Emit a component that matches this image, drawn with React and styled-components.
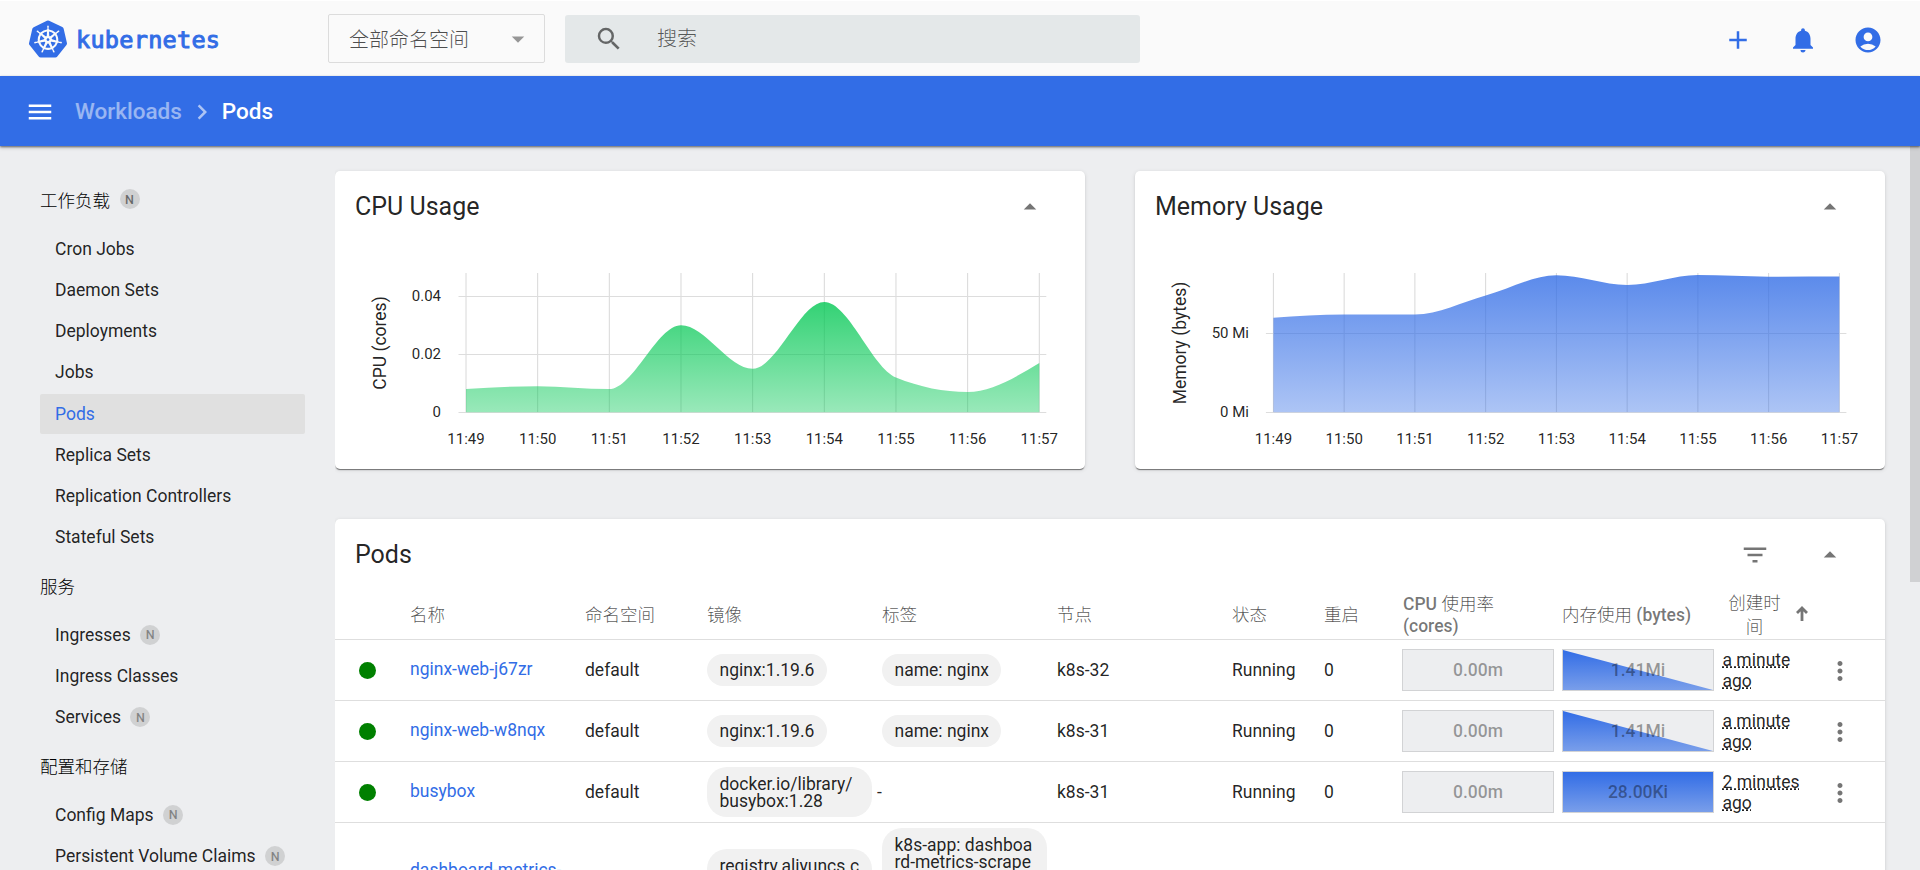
import React from 'react';
import styled, { createGlobalStyle } from 'styled-components';
import {
  MdAccountCircle,
  MdAdd,
  MdArrowDropDown,
  MdArrowDropUp,
  MdChevronRight,
  MdFilterList,
  MdMenu,
  MdMoreVert,
  MdNotifications,
  MdSearch,
} from 'react-icons/md';
import { SiKubernetes } from 'react-icons/si';

const GlobalStyle = createGlobalStyle`
  * {
    box-sizing: border-box;
  }

  body {
    margin: 0;
    overflow: hidden;
    font-family: Roboto, 'Noto Sans CJK SC', sans-serif;
    font-size: 17.5px;
    color: rgba(0, 0, 0, 0.87);
    background-color: #edeef0;
  }

  svg {
    display: block;
    flex-shrink: 0;
  }
`;

const Page = styled.div`
  display: flex;
  flex-direction: column;
  height: 870px;
  overflow: hidden;
`;

const Header = styled.header`
  display: flex;
  align-items: center;
  flex-shrink: 0;
  height: 76px;
  padding: 0 37px 0 29px;
  background-color: #fafafa;
  border-top: 1px solid #fff;
`;

const Logo = styled.div`
  display: flex;
  align-items: center;
  width: 299px;
  padding-top: 1px;
  color: #326de6;
`;

const NamespaceSelect = styled.div`
  display: flex;
  align-items: center;
  justify-content: space-between;
  width: 217px;
  height: 49px;
  margin-right: 20px;
  padding: 0 11px 0 20px;
  border: 1px solid #dcdcdc;
  border-radius: 2px;
  font-size: 20px;
  font-weight: 300;
  color: rgba(0, 0, 0, 0.7);

  svg {
    color: rgba(0, 0, 0, 0.4);
  }
`;

const SearchBox = styled.div`
  display: flex;
  align-items: center;
  width: 575px;
  height: 48px;
  padding: 0 29px;
  gap: 33px;
  border-radius: 3px;
  background-color: #e4e8e9;
  font-size: 20px;
  font-weight: 300;
  color: rgba(0, 0, 0, 0.65);

  svg {
    color: rgba(0, 0, 0, 0.56);
  }
`;

const SearchHint = styled.span`
  padding-bottom: 2px;
`;

const HeaderActions = styled.div`
  display: flex;
  gap: 35px;
  margin-left: auto;
  padding-top: 3px;
  color: #326de6;
`;

const ActionBar = styled.div`
  display: flex;
  align-items: center;
  flex-shrink: 0;
  height: 70px;
  padding-left: 25px;
  background-color: #326de6;
  color: #fff;
  font-size: 22.5px;
  font-weight: 500;
  box-shadow: 0 1px 2px rgba(0, 0, 0, 0.5), 0 2px 4px rgba(0, 0, 0, 0.16);
  z-index: 1;
`;

const MenuIcon = styled(MdMenu)`
  margin-top: 2px;
`;

const Crumb = styled.span`
  margin-left: ${({ $first }) => ($first ? '20px' : '5px')};
  margin-right: 5px;
  opacity: ${({ $first }) => ($first ? 0.5 : 1)};
`;

const CrumbArrow = styled(MdChevronRight)`
  margin-top: 1px;
  opacity: 0.6;
`;

const Body = styled.div`
  display: flex;
  flex: 1;
  min-height: 0;
`;

const Sidebar = styled.nav`
  flex-shrink: 0;
  width: 335px;
  padding: 26.4px 30px 0 40px;
  overflow: hidden;
`;

const NavHeading = styled.div`
  display: flex;
  align-items: center;
  height: 56.25px;
  padding-bottom: 3px;
  font-weight: 300;
  color: #000;
`;

const NavItem = styled.div`
  display: flex;
  align-items: center;
  height: 40px;
  margin-bottom: 1.25px;
  padding-left: 15px;
  border-radius: 2px;
  white-space: nowrap;
  color: ${({ $active }) => ($active ? '#326de6' : 'inherit')};
  background-color: ${({ $active }) => ($active ? '#e0e0e0' : 'transparent')};
`;

const Badge = styled.span`
  display: flex;
  align-items: center;
  justify-content: center;
  width: 20px;
  height: 20px;
  margin-left: 9.5px;
  border-radius: 50%;
  background-color: rgba(0, 0, 0, 0.12);
  color: ${({ $dark }) => ($dark ? 'rgba(0, 0, 0, 0.5)' : 'rgba(0, 0, 0, 0.38)')};
  font-size: 12.5px;
  font-weight: 500;
`;

const Content = styled.main`
  flex: 1;
  min-width: 0;
  padding: 25px 25px 0 0;
  overflow: hidden;
`;

const ChartsRow = styled.div`
  display: flex;
  gap: 50px;
  margin-bottom: 50px;
`;

const Card = styled.section`
  width: ${({ $width }) => $width};
  border-radius: 5px;
  background-color: #fff;
  box-shadow: 0 2px 1px -1px rgba(0, 0, 0, 0.4), 0 1px 1px rgba(0, 0, 0, 0.14),
    0 1px 4px rgba(0, 0, 0, 0.12);
`;

const CardHeader = styled.div`
  display: flex;
  align-items: center;
  height: 70px;
  padding: 0 40px 0 20px;
`;

const CardTitle = styled.h2`
  flex: 1;
  margin: 0;
  font-size: 25px;
  font-weight: 400;
`;

const CardActions = styled.div`
  display: flex;
  gap: 45px;
  padding-top: 1px;
  color: rgba(0, 0, 0, 0.54);
`;

const ChartSvg = styled.svg`
  width: 750px;
  height: 228px;

  text {
    font-size: 15px;
    fill: rgba(0, 0, 0, 0.87);
  }

  .axis-title {
    font-size: 17.5px;
  }
`;

const columns = '75px 175px 122px 175px 175px 175px 92px 78px 160px 160px 96px 67px';

const HeadRow = styled.div`
  display: grid;
  grid-template-columns: ${columns};
  align-items: center;
  height: 51px;
  padding-top: 2px;
  border-bottom: 1px solid #dedede;
  font-weight: 500;
  line-height: 22.5px;
  color: rgba(0, 0, 0, 0.54);
`;

const Row = styled.div`
  display: grid;
  grid-template-columns: ${columns};
  align-items: center;
  min-height: 61px;
  padding: 5px 0;
  border-bottom: 1px solid #dedede;
  line-height: 22.5px;
`;

const HeadCjk = styled.span`
  font-weight: 300;
  color: rgba(0, 0, 0, 0.68);
`;

const HeadText = styled.div`
  padding-left: ${({ $indent }) => ($indent ? '1px' : 0)};
`;

const SortCell = styled.div`
  display: flex;
  align-items: center;
  gap: 9px;
  line-height: 24px;

  svg {
    margin-bottom: 4px;
  }
`;

const SortLabel = styled.span`
  width: 65px;
  padding: 0 5px;
  text-align: center;
  font-weight: 300;
  color: rgba(0, 0, 0, 0.68);
`;

const StatusDot = styled.div`
  width: 17px;
  height: 17px;
  margin-left: 24px;
  border-radius: 50%;
  background-color: #008000;
`;

const PodLink = styled.a`
  width: 165px;
  line-height: 21.5px;
  color: #326de6;
`;

const Chips = styled.div`
  display: flex;
  flex-direction: column;
  align-items: flex-start;
  gap: 10px;
  width: 165px;
`;

const Chip = styled.div`
  padding: 8.5px 12.5px 6.5px;
  border-radius: 20px;
  background-color: #f1f1f1;
  line-height: 17.5px;
  word-break: break-all;
`;

const NoLabels = styled.div`
  margin-left: -5px;
`;

const UsageBox = styled.div`
  display: grid;
  place-items: center;
  width: 152px;
  height: 42px;
  border: 1px solid #d2d3d5;
  background-color: #edeef0;
  font-weight: 500;
  color: rgba(0, 0, 0, 0.38);

  & > * {
    grid-area: 1 / 1;
  }
`;

const Age = styled.div`
  width: 84px;
  padding: 1px 0 0 0.5px;
  line-height: 21px;
  text-decoration: underline dotted;

  span {
    display: block;
  }
`;

const RowMenu = styled.div`
  display: flex;
  padding: 1px 0 0 7px;
  color: rgba(0, 0, 0, 0.54);
`;

const ScrollTrack = styled.div`
  flex-shrink: 0;
  width: 10px;
`;

const ScrollThumb = styled.div`
  height: 436px;
  background-color: #d0d1d3;
`;

const navGroups = [
  {
    title: '工作负载',
    namespaced: true,
    items: [
      { label: 'Cron Jobs' },
      { label: 'Daemon Sets' },
      { label: 'Deployments' },
      { label: 'Jobs' },
      { label: 'Pods', active: true },
      { label: 'Replica Sets' },
      { label: 'Replication Controllers' },
      { label: 'Stateful Sets' },
    ],
  },
  {
    title: '服务',
    items: [
      { label: 'Ingresses', namespaced: true },
      { label: 'Ingress Classes' },
      { label: 'Services', namespaced: true },
    ],
  },
  {
    title: '配置和存储',
    items: [
      { label: 'Config Maps', namespaced: true },
      { label: 'Persistent Volume Claims', namespaced: true },
    ],
  },
];

const times = ['11:49', '11:50', '11:51', '11:52', '11:53', '11:54', '11:55', '11:56', '11:57'];

const cpuChart = {
  id: 'cpu',
  title: 'CPU (cores)',
  color: '#00c752',
  values: [0.008, 0.009, 0.008, 0.03, 0.015, 0.038, 0.012, 0.007, 0.017],
  max: 0.048,
  ticks: [
    { value: 0, label: '0' },
    { value: 0.02, label: '0.02' },
    { value: 0.04, label: '0.04' },
  ],
  left: 131,
  right: 704.3,
  labelEnd: 106,
  titleX: 51,
};

const memoryChart = {
  id: 'memory',
  title: 'Memory (bytes)',
  color: '#326de6',
  values: [59.7, 61.8, 61.8, 73.8, 86.5, 80.4, 86.7, 85.7, 85.8],
  max: 88,
  ticks: [
    { value: 0, label: '0 Mi' },
    { value: 50, label: '50 Mi' },
  ],
  left: 138.4,
  right: 704.4,
  labelEnd: 114,
  titleX: 51,
};

const pods = [
  {
    name: 'nginx-web-j67zr',
    images: ['nginx:1.19.6'],
    labels: ['name: nginx'],
    node: 'k8s-32',
    cpu: '0.00m',
    memory: '1.41Mi',
    trend: [1, 0],
    age: ['a minute', 'ago'],
  },
  {
    name: 'nginx-web-w8nqx',
    images: ['nginx:1.19.6'],
    labels: ['name: nginx'],
    node: 'k8s-31',
    cpu: '0.00m',
    memory: '1.41Mi',
    trend: [1, 0],
    age: ['a minute', 'ago'],
  },
  {
    name: 'busybox',
    images: ['docker.io/library/busybox:1.28'],
    labels: [],
    node: 'k8s-31',
    cpu: '0.00m',
    memory: '28.00Ki',
    trend: [1, 1],
    age: ['2 minutes', 'ago'],
  },
  {
    name: 'dashboard-metrics-scraper-79c5968bdc-7xk2p',
    images: ['registry.aliyuncs.com/google_containers/metrics-scraper:v1.0.6'],
    labels: ['k8s-app: dashboard-metrics-scraper', 'pod-template-hash: 79c5968bdc'],
  },
];

// Monotone cubic interpolation, so the curve never overshoots its points
const monotonePath = (points) => {
  const n = points.length;
  const slopes = [];
  for (let i = 0; i < n - 1; i += 1) {
    slopes.push((points[i + 1][1] - points[i][1]) / (points[i + 1][0] - points[i][0]));
  }
  const tangents = points.map((_, i) => {
    if (i === 0 || i === n - 1) return null;
    const a = slopes[i - 1];
    const b = slopes[i];
    return (Math.sign(a) + Math.sign(b)) * Math.min(Math.abs(a), Math.abs(b), Math.abs(a + b) / 4) || 0;
  });
  tangents[0] = (3 * slopes[0] - tangents[1]) / 2;
  tangents[n - 1] = (3 * slopes[n - 2] - tangents[n - 2]) / 2;

  let d = `M${points[0][0]},${points[0][1]}`;
  for (let i = 0; i < n - 1; i += 1) {
    const [x0, y0] = points[i];
    const [x1, y1] = points[i + 1];
    const dx = (x1 - x0) / 3;
    d += `C${x0 + dx},${y0 + dx * tangents[i]},${x1 - dx},${y1 - dx * tangents[i + 1]},${x1},${y1}`;
  }
  return d;
};

const AreaChart = ({ chart }) => {
  const top = 32;
  const bottom = 171.3;
  const step = (chart.right - chart.left) / (times.length - 1);
  const x = (i) => chart.left + i * step;
  const y = (value) => bottom - (value / chart.max) * (bottom - top);
  const line = monotonePath(chart.values.map((value, i) => [x(i), y(value)]));

  return (
    <ChartSvg viewBox="0 0 750 228">
      <defs>
        <linearGradient id={`fill-${chart.id}`} x1="0" y1="0" x2="0" y2="1">
          <stop offset="0" stopColor={chart.color} stopOpacity="0.8" />
          <stop offset="1" stopColor={chart.color} stopOpacity="0.4" />
        </linearGradient>
      </defs>
      {times.map((time, i) => (
        <g key={time}>
          <line x1={x(i)} x2={x(i)} y1={top} y2={bottom} stroke="#d8d8d8" />
          <text x={x(i)} y="203" textAnchor="middle">{time}</text>
        </g>
      ))}
      {chart.ticks.map((tick) => (
        <g key={tick.label}>
          <line
            x1={chart.left - 7.5}
            x2={chart.right + 7}
            y1={Math.round(y(tick.value)) + 0.5}
            y2={Math.round(y(tick.value)) + 0.5}
            stroke="#ddd"
          />
          <text x={chart.labelEnd} y={y(tick.value) + 5} textAnchor="end">{tick.label}</text>
        </g>
      ))}
      <path d={`${line}L${chart.right},${bottom}L${chart.left},${bottom}Z`} fill={`url(#fill-${chart.id})`} />
      <text className="axis-title" textAnchor="middle" transform={`translate(${chart.titleX} 102) rotate(-90)`}>
        {chart.title}
      </text>
    </ChartSvg>
  );
};

const Trend = styled.svg`
  width: 150px;
  height: 40px;
`;

const UsageValue = styled.span`
  z-index: 1;
`;

const Usage = ({ value, trend }) => (
  <UsageBox>
    {trend && (
      <Trend viewBox="0 0 150 40">
        <defs>
          <linearGradient id="trend" x1="0" y1="0" x2="0" y2="1">
            <stop offset="0" stopColor="#326de6" />
            <stop offset="1" stopColor="#326de6" stopOpacity="0.62" />
          </linearGradient>
        </defs>
        <polygon
          points={`0,40 0,${40 - trend[0] * 40} 150,${40 - trend[1] * 40} 150,40`}
          fill="url(#trend)"
        />
      </Trend>
    )}
    <UsageValue>{value}</UsageValue>
  </UsageBox>
);

const PodRow = ({ pod }) => (
  <Row>
    <StatusDot />
    <PodLink>{pod.name}</PodLink>
    <div>default</div>
    <Chips>
      {pod.images.map((image) => (
        <Chip key={image}>{image}</Chip>
      ))}
    </Chips>
    {pod.labels.length > 0 ? (
      <Chips>
        {pod.labels.map((label) => (
          <Chip key={label}>{label}</Chip>
        ))}
      </Chips>
    ) : (
      <NoLabels>-</NoLabels>
    )}
    {pod.node && (
      <>
        <div>{pod.node}</div>
        <div>Running</div>
        <div>0</div>
        <Usage value={pod.cpu} />
        <Usage value={pod.memory} trend={pod.trend} />
        <Age>
          {pod.age.map((part) => (
            <span key={part}>{part}</span>
          ))}
        </Age>
        <RowMenu>
          <MdMoreVert size={30} />
        </RowMenu>
      </>
    )}
  </Row>
);

const App = () => (
  <Page>
    <GlobalStyle />
    <Header>
      <Logo>
        <SiKubernetes size={38} />
        <svg width="170" height="38" viewBox="0 0 170 38">
          <text
            x="9"
            y="28"
            textLength="144"
            fontFamily="DejaVu Sans Mono"
            fontSize="23.5"
            fill="#326de6"
            stroke="#326de6"
            strokeWidth="1"
          >
            kubernetes
          </text>
        </svg>
      </Logo>
      <NamespaceSelect>
        全部命名空间
        <MdArrowDropDown size={30} />
      </NamespaceSelect>
      <SearchBox>
        <MdSearch size={30} />
        <SearchHint>搜索</SearchHint>
      </SearchBox>
      <HeaderActions>
        <MdAdd size={30} />
        <MdNotifications size={30} />
        <MdAccountCircle size={30} />
      </HeaderActions>
    </Header>
    <ActionBar>
      <MenuIcon size={30} />
      <Crumb $first>Workloads</Crumb>
      <CrumbArrow size={30} />
      <Crumb>Pods</Crumb>
    </ActionBar>
    <Body>
      <Sidebar>
        {navGroups.map((group) => (
          <React.Fragment key={group.title}>
            <NavHeading>
              {group.title}
              {group.namespaced && <Badge $dark>N</Badge>}
            </NavHeading>
            {group.items.map((item) => (
              <NavItem key={item.label} $active={item.active}>
                {item.label}
                {item.namespaced && <Badge>N</Badge>}
              </NavItem>
            ))}
          </React.Fragment>
        ))}
      </Sidebar>
      <Content>
        <ChartsRow>
          <Card $width="750px">
            <CardHeader>
              <CardTitle>CPU Usage</CardTitle>
              <CardActions>
                <MdArrowDropUp size={30} />
              </CardActions>
            </CardHeader>
            <AreaChart chart={cpuChart} />
          </Card>
          <Card $width="750px">
            <CardHeader>
              <CardTitle>Memory Usage</CardTitle>
              <CardActions>
                <MdArrowDropUp size={30} />
              </CardActions>
            </CardHeader>
            <AreaChart chart={memoryChart} />
          </Card>
        </ChartsRow>
        <Card $width="1550px">
          <CardHeader>
            <CardTitle>Pods</CardTitle>
            <CardActions>
              <MdFilterList size={30} />
              <MdArrowDropUp size={30} />
            </CardActions>
          </CardHeader>
          <HeadRow>
            <span />
            <HeadCjk>名称</HeadCjk>
            <HeadCjk>命名空间</HeadCjk>
            <HeadCjk>镜像</HeadCjk>
            <HeadCjk>标签</HeadCjk>
            <HeadCjk>节点</HeadCjk>
            <HeadCjk>状态</HeadCjk>
            <HeadCjk>重启</HeadCjk>
            <HeadText $indent>
              CPU <HeadCjk>使用率</HeadCjk>
              <br />
              (cores)
            </HeadText>
            <HeadText>
              <HeadCjk>内存使用</HeadCjk> (bytes)
            </HeadText>
            <SortCell>
              <SortLabel>创建时间</SortLabel>
              <svg width="12" height="15" viewBox="0 0 12 15" fill="none" stroke="currentColor" strokeWidth="2.8">
                <path d="M6 15V2M1 7l5-5 5 5" />
              </svg>
            </SortCell>
          </HeadRow>
          {pods.map((pod) => (
            <PodRow key={pod.name} pod={pod} />
          ))}
        </Card>
      </Content>
      <ScrollTrack>
        <ScrollThumb />
      </ScrollTrack>
    </Body>
  </Page>
);

export default App;
